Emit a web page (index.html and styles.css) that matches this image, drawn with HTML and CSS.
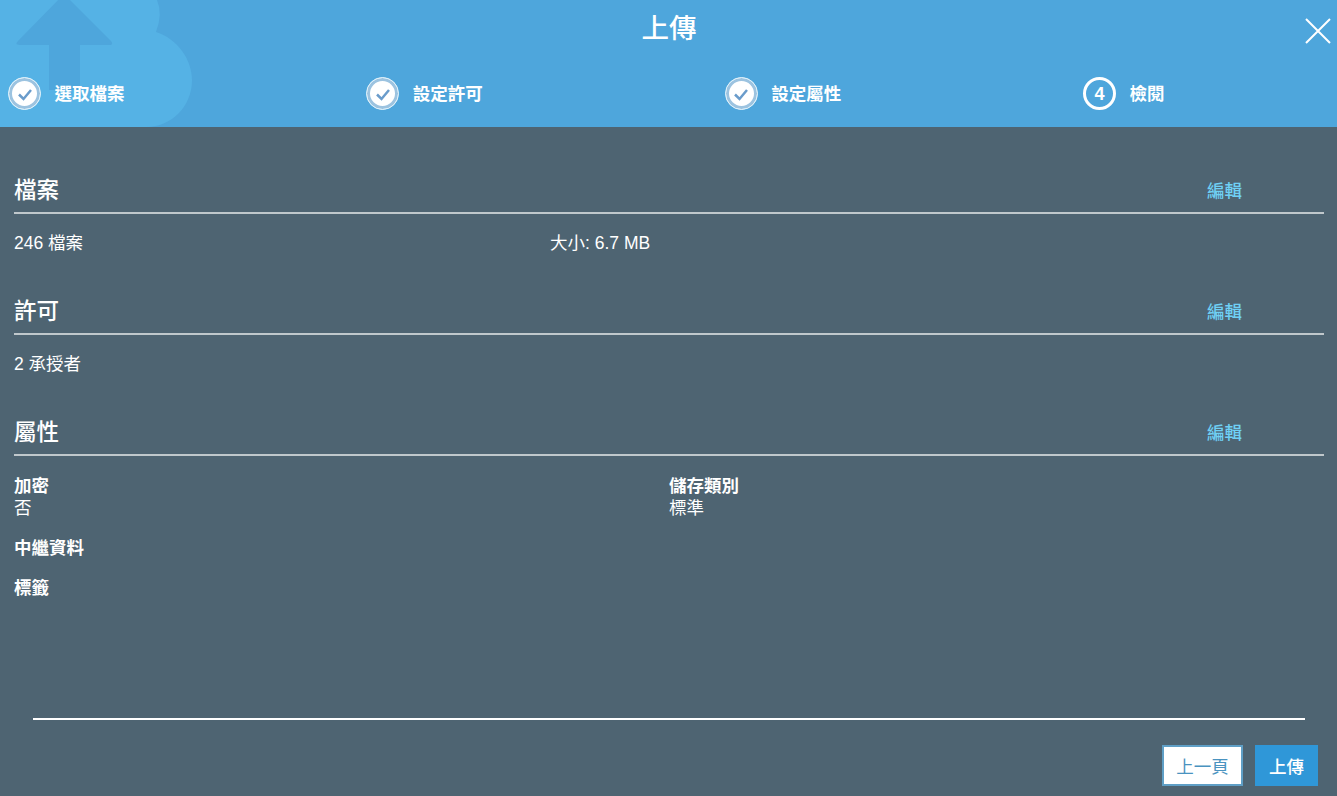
FILE: index.html
```html
<!DOCTYPE html>
<html lang="zh-Hant">
<head>
    <meta charset="UTF-8">
    <title>上傳</title>
    <link rel="stylesheet" href="styles.css">
</head>
<body>
    <div class="header">
        <svg class="header-art" width="200" height="127" viewBox="0 0 200 127">
            <path class="art-b" d="M0 0H157Q163 14 156 32C178 39 192 60 192 80C192 106 172 127 146 127H0Z"/>
            <path class="art-arrow" d="M64 -6L111 41Q114 45 109 45H80V90H49V45H20Q14 45 18 41Z"/>
        </svg>
        <h1 class="title">上傳</h1>
        <button class="close" aria-label="關閉">
            <svg width="26" height="26" viewBox="0 0 26 26"><path d="M1 1L25 25M25 1L1 25"/></svg>
        </button>
        <div class="steps">
            <div class="step">
                <span class="step-icon done"><svg width="18" height="18" viewBox="0 0 18 18"><path d="M3 9.5L7.5 14L15 5"/></svg></span>
                <span>選取檔案</span>
            </div>
            <div class="step">
                <span class="step-icon done"><svg width="18" height="18" viewBox="0 0 18 18"><path d="M3 9.5L7.5 14L15 5"/></svg></span>
                <span>設定許可</span>
            </div>
            <div class="step">
                <span class="step-icon done"><svg width="18" height="18" viewBox="0 0 18 18"><path d="M3 9.5L7.5 14L15 5"/></svg></span>
                <span>設定屬性</span>
            </div>
            <div class="step">
                <span class="step-icon current">4</span>
                <span>檢閱</span>
            </div>
        </div>
    </div>

    <div class="content">
        <div class="section">
            <div class="section-head"><h2>檔案</h2><a class="edit">編輯</a></div>
            <div class="row-files">
                <span>246 檔案</span>
                <span>大小: 6.7 MB</span>
            </div>
        </div>
        <div class="section">
            <div class="section-head"><h2>許可</h2><a class="edit">編輯</a></div>
            <div class="row-plain">2 承授者</div>
        </div>
        <div class="section">
            <div class="section-head"><h2>屬性</h2><a class="edit">編輯</a></div>
            <div class="props">
                <div><b>加密</b><br>否</div>
                <div><b>儲存類別</b><br>標準</div>
            </div>
            <div class="prop-single"><b>中繼資料</b></div>
            <div class="prop-single"><b>標籤</b></div>
        </div>
    </div>

    <div class="footer">
        <button class="btn btn-back">上一頁</button>
        <button class="btn btn-primary">上傳</button>
    </div>
</body>
</html>
```

FILE: styles.css
```css
html, body {
    margin: 0;
    height: 100%;
}
body {
    font-family: 'Liberation Sans', 'Noto Sans CJK TC', sans-serif;
    font-size: 17.5px;
    line-height: 22px;
    color: #fff;
    background-color: #4e6472;
    overflow: hidden;
}
.header {
    position: relative;
    box-sizing: border-box;
    height: 127px;
    background-color: #4ea6dc;
    overflow: hidden;
}
.header-art {
    position: absolute;
    left: 0;
    top: 0;
}
.art-b {
    fill: #55b2e5;
}
.art-arrow {
    fill: #4ea6dc;
}
.title {
    position: relative;
    margin: 0;
    padding: 10px 0 0 1px;
    height: 40px;
    line-height: 38px;
    font-size: 27.5px;
    font-weight: 500;
    text-align: center;
}
.close {
    position: absolute;
    top: 18px;
    right: 6px;
    padding: 0;
    border: none;
    background: none;
}
.close svg {
    display: block;
}
.close path {
    fill: none;
    stroke: #fff;
    stroke-width: 2;
}
.steps {
    position: relative;
    display: grid;
    grid-template-columns: repeat(4, 358.33px);
    padding: 27px 0 0 8px;
}
.step {
    display: flex;
    align-items: center;
    gap: 13.5px;
    font-weight: bold;
}
.step-icon {
    display: flex;
    align-items: center;
    justify-content: center;
    box-sizing: border-box;
    width: 33px;
    height: 33px;
    border-radius: 50%;
}
.step-icon.done {
    background-color: #fff;
    border: 1.5px solid #dff2fb;
    box-shadow: inset 0 0 0 3px #9cc3e0;
}
.step-icon.done path {
    fill: none;
    stroke: #6a9ccb;
    stroke-width: 2.5;
}
.step-icon.current {
    border: 3px solid #fff;
    font-size: 18px;
}
.content {
    padding: 0 13px 0 14px;
}
.section-head {
    display: flex;
    align-items: flex-end;
    height: 42px;
    border-bottom: 2px solid #c0c8cc;
}
.section-head h2 {
    flex: 1;
    margin: 0;
    padding-bottom: 6px;
    font-size: 22.5px;
    line-height: 30px;
    font-weight: 500;
}
.edit {
    width: 117px;
    padding-bottom: 10px;
    color: #6fd0f5;
    font-weight: 500;
}
.section:first-child {
    padding-top: 43px;
}
.row-files {
    display: grid;
    grid-template-columns: 536px 1fr;
    padding: 18px 0 37px;
}
.row-plain {
    padding: 18px 0 37px;
}
.props {
    display: grid;
    grid-template-columns: 655px 1fr;
    padding-top: 19px;
}
.prop-single {
    padding-top: 18px;
}
.footer {
    position: absolute;
    left: 33px;
    right: 32px;
    top: 718px;
    display: flex;
    justify-content: flex-end;
    gap: 12px;
    padding-top: 25px;
    border-top: 2px solid #fff;
}
.btn {
    height: 41px;
    padding: 0;
    font-family: inherit;
    font-size: 17.5px;
    border-radius: 0;
}
.btn-back {
    width: 81px;
    color: #4a93c0;
    background-color: #fff;
    border: 2px solid #5f9fc6;
}
.btn-primary {
    width: 63px;
    margin-right: -13px;
    color: #fff;
    font-weight: 500;
    background-color: #2f97d8;
    border: none;
}
```
